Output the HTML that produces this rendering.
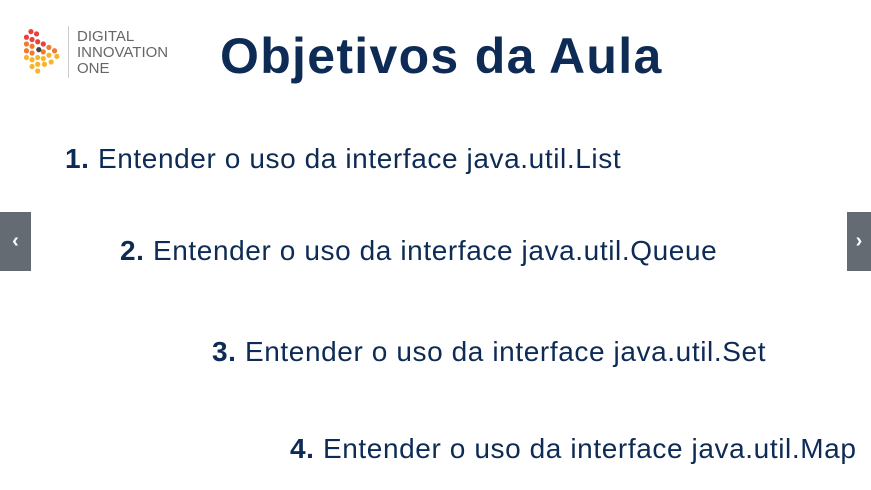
<!DOCTYPE html>
<html><head><meta charset="utf-8"><style>
body{margin:0;width:871px;height:490px;background:#fff;overflow:hidden;position:relative;font-family:"Liberation Sans",sans-serif;color:#0d2b55}
.t{position:absolute;white-space:nowrap}
h1{position:absolute;left:220px;top:27px;margin:0;font-size:50px;font-weight:bold;color:#0d2b55;letter-spacing:1.3px}
.li{position:absolute;font-size:28px;letter-spacing:0.6px;white-space:nowrap}
.li b{font-weight:bold}
.nav{position:absolute;top:212px;height:59px;background:#656b73;color:#fff;font-weight:bold;font-size:20px;display:flex;align-items:center;justify-content:center}
</style></head><body>
<svg class="t" style="left:18px;top:26px" width="54" height="54" viewBox="0 0 45 48">
<g fill="#e8413c"><circle cx="10" cy="5" r="2.3"/><circle cx="15" cy="7" r="2.3"/><circle cx="6" cy="10" r="2.3"/><circle cx="11" cy="12" r="2.3"/><circle cx="16" cy="14" r="2.3"/><circle cx="21" cy="16" r="2.3"/></g>
<g fill="#f07a2d"><circle cx="6" cy="16" r="2.3"/><circle cx="11" cy="18" r="2.3"/><circle cx="26" cy="19" r="2.3"/><circle cx="6" cy="22" r="2.3"/><circle cx="11" cy="24" r="2.3"/><circle cx="21" cy="23" r="2.3"/><circle cx="31" cy="22" r="2.3"/></g>
<circle cx="17" cy="21" r="2.3" fill="#444"/>
<g fill="#f7b52c"><circle cx="6" cy="28" r="2.3"/><circle cx="11" cy="30" r="2.3"/><circle cx="16" cy="28" r="2.3"/><circle cx="21" cy="29" r="2.3"/><circle cx="26" cy="26" r="2.3"/><circle cx="33" cy="27" r="2.3"/><circle cx="11" cy="36" r="2.3"/><circle cx="16" cy="34" r="2.3"/><circle cx="22" cy="34" r="2.3"/><circle cx="28" cy="32" r="2.3"/><circle cx="16" cy="40" r="2.3"/></g>
</svg>
<div class="t" style="left:68px;top:26px;width:1px;height:52px;background:#ccc"></div>
<div class="t" style="left:77px;top:29px;font-size:15px;line-height:16px;color:#666">DIGITAL<br>INNOVATION<br>ONE</div>
<h1>Objetivos da Aula</h1>
<div class="li" style="left:65px;top:143px"><b>1.</b> Entender o uso da interface java.util.List</div>
<div class="li" style="left:120px;top:235px"><b>2.</b> Entender o uso da interface java.util.Queue</div>
<div class="li" style="left:212px;top:336px"><b>3.</b> Entender o uso da interface java.util.Set</div>
<div class="li" style="left:290px;top:433px"><b>4.</b> Entender o uso da interface java.util.Map</div>
<div class="nav" style="left:0;width:31px">&lsaquo;</div>
<div class="nav" style="left:847px;width:24px">&rsaquo;</div>
</body></html>
